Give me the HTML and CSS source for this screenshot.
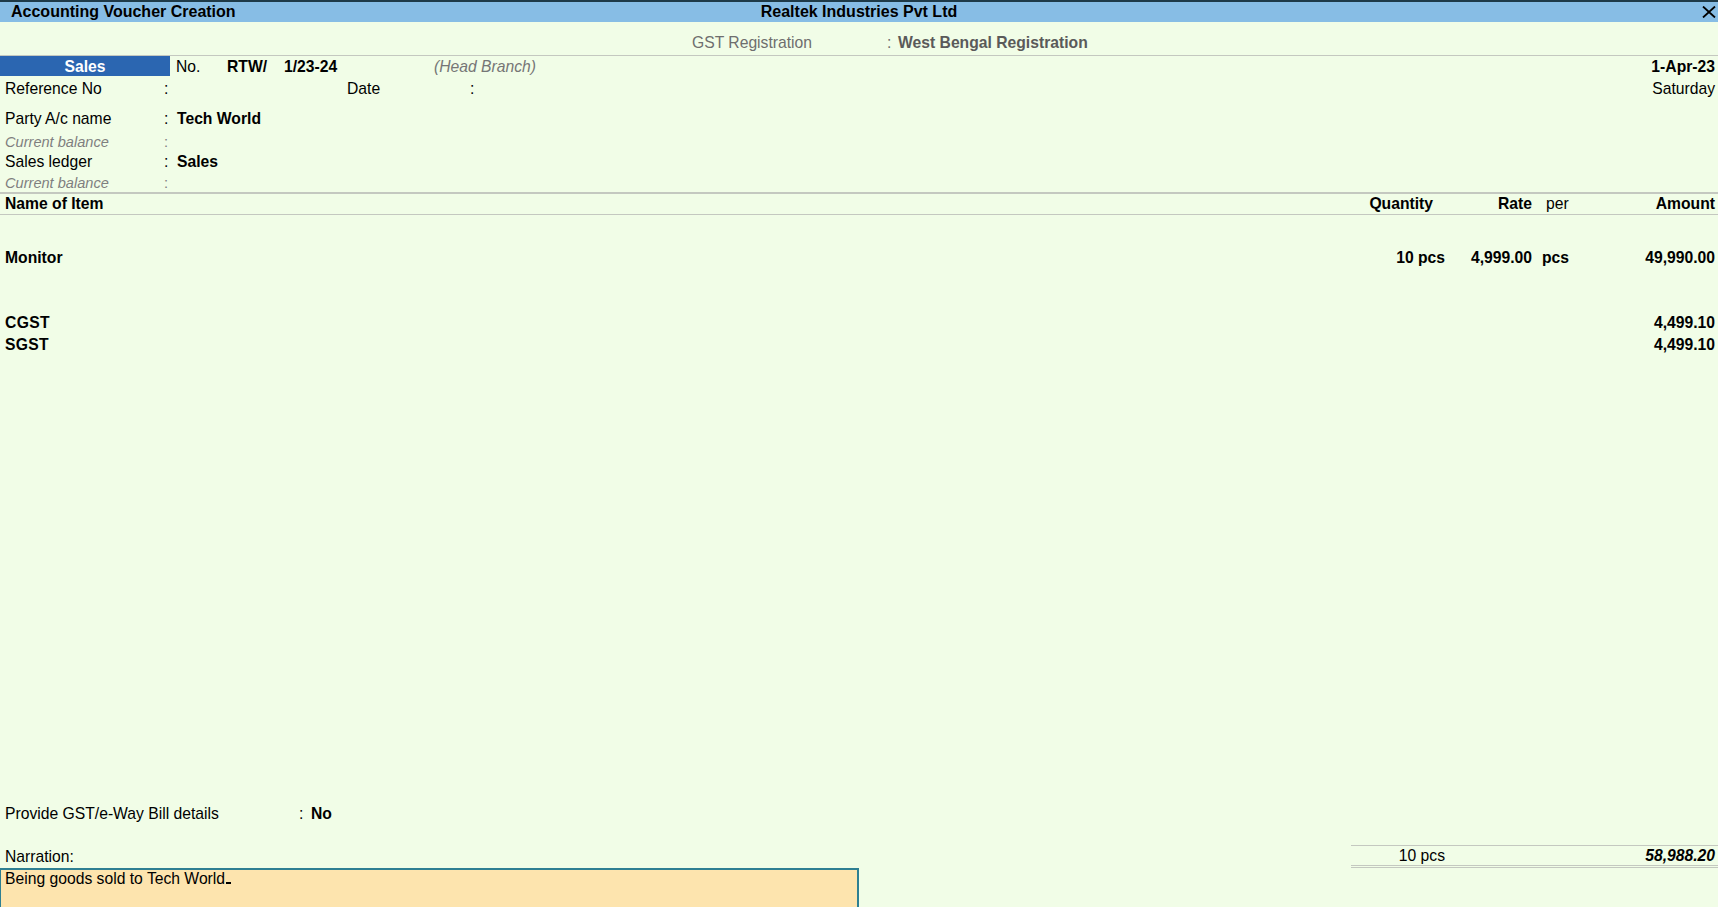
FILE: index.html
```html
<!DOCTYPE html>
<html>
<head>
<meta charset="utf-8">
<title>Accounting Voucher Creation</title>
<link rel="stylesheet" href="styles.css">
</head>
<body>
<div class="page">
  <div class="titlebar">
    <div class="tb-left">Accounting Voucher Creation</div>
    <div class="tb-center">Realtek Industries Pvt Ltd</div>
    <div class="tb-right">
      <svg class="close" width="14" height="12" viewBox="0 0 14 12"><path d="M1 0.5 L13 11.5 M13 0.5 L1 11.5" stroke="#000" stroke-width="1.8" fill="none"/></svg>
    </div>
  </div>

  <div class="gstrow">
    <span class="gst-label">GST Registration</span>
    <span class="gst-colon">:</span>
    <span class="gst-value">West Bengal Registration</span>
  </div>

  <div class="vrow">
    <div class="vtype">Sales</div>
    <span class="vno">No.</span>
    <span class="vpre">RTW/</span>
    <span class="vnum">1/23-24</span>
    <span class="vbranch">(Head Branch)</span>
    <span class="vdate">1-Apr-23</span>
  </div>

  <div class="frow ref">
    <span class="flabel">Reference No</span>
    <span class="fcolon">:</span>
    <span class="fdate">Date</span>
    <span class="fcolon2">:</span>
    <span class="fday">Saturday</span>
  </div>

  <div class="frow party">
    <span class="flabel">Party A/c name</span>
    <span class="fcolon">:</span>
    <span class="fvalue">Tech World</span>
  </div>
  <div class="frow cb cb1">
    <span class="flabel">Current balance</span>
    <span class="fcolon">:</span>
  </div>
  <div class="frow ledger">
    <span class="flabel">Sales ledger</span>
    <span class="fcolon">:</span>
    <span class="fvalue">Sales</span>
  </div>
  <div class="frow cb cb2">
    <span class="flabel">Current balance</span>
    <span class="fcolon">:</span>
  </div>

  <div class="irow ihead">
    <span class="c-name">Name of Item</span>
    <span class="c-qty">Quantity</span>
    <span class="c-rate">Rate</span>
    <span class="c-per">per</span>
    <span class="c-amt">Amount</span>
  </div>

  <div class="irow item">
    <span class="c-name">Monitor</span>
    <span class="c-qty">10 pcs</span>
    <span class="c-rate">4,999.00</span>
    <span class="c-per">pcs</span>
    <span class="c-amt">49,990.00</span>
  </div>

  <div class="irow tax tax1">
    <span class="c-name">CGST</span>
    <span class="c-qty"></span>
    <span class="c-rate"></span>
    <span class="c-per"></span>
    <span class="c-amt">4,499.10</span>
  </div>
  <div class="irow tax">
    <span class="c-name">SGST</span>
    <span class="c-qty"></span>
    <span class="c-rate"></span>
    <span class="c-per"></span>
    <span class="c-amt">4,499.10</span>
  </div>

  <div class="spacer"></div>

  <div class="frow ewb">
    <span class="ewb-label">Provide GST/e-Way Bill details</span>
    <span class="ewb-colon">:</span>
    <span class="fvalue">No</span>
  </div>

  <div class="narr-row">
    <span class="narr-label">Narration:</span>
    <div class="totals">
      <span class="t-qty">10 pcs</span>
      <span class="t-amt">58,988.20</span>
    </div>
  </div>

  <div class="narr-box">Being goods sold to Tech World<span class="cursor"></span></div>
</div>
</body>
</html>
```

FILE: styles.css
```css
* { box-sizing: border-box; }

html, body {
  margin: 0;
  padding: 0;
}

body {
  font-family: "Liberation Sans", Arial, sans-serif;
  font-size: 15.7px;
  color: #000;
  background: #f1fde7;
  width: 1718px;
  height: 907px;
  overflow: hidden;
}

.page {
  display: flex;
  flex-direction: column;
  height: 907px;
}

/* title bar */
.titlebar {
  height: 22px;
  border-top: 2px solid #1e3a48;
  background: #87bde5;
  display: grid;
  grid-template-columns: 1fr auto 1fr;
  align-items: center;
  padding: 0 2px;
  font-weight: bold;
  font-size: 16px;
  line-height: 20px;
}
.tb-left { padding-left: 9px; }
.tb-center { text-align: center; }
.tb-right { display: flex; justify-content: flex-end; align-items: center; }
.close { display: block; }

/* gst registration */
.gstrow {
  height: 34px;
  padding-top: 11px;
  line-height: 20px;
  border-bottom: 1px solid #c4c8c0;
  display: flex;
  padding-left: 692px;
  color: #6e6e6e;
}
.gst-label { width: 195px; }
.gst-colon { width: 11px; }
.gst-value { font-weight: bold; color: #5a5a5a; }

/* voucher type row */
.vrow {
  height: 20px;
  line-height: 20px;
  display: flex;
  align-items: stretch;
}
.vrow > span { padding-top: 1px; }
.vtype {
  width: 170px;
  height: 20px;
  padding-top: 1px;
  background: #2b66b1;
  color: #fff;
  font-weight: bold;
  text-align: center;
}
.vno { margin-left: 6px; width: 51px; }
.vpre { font-weight: bold; width: 57px; }
.vnum { font-weight: bold; width: 150px; }
.vbranch { font-style: italic; color: #767676; }
.vdate { margin-left: auto; margin-right: 3px; font-weight: bold; }

/* field rows */
.frow {
  display: flex;
  height: 20px;
  line-height: 20px;
  padding-left: 5px;
  padding-top: 1px;
}
.flabel { width: 159px; }
.fcolon { width: 13px; }
.fvalue { font-weight: bold; }
.fdate { margin-left: 170px; width: 123px; }
.fcolon2 { width: 10px; }
.fday { margin-left: auto; margin-right: 3px; }

.ref { margin-top: 2px; }
.party { margin-top: 10px; }
.cb {
  height: 18px;
  line-height: 18px;
  font-style: italic;
  font-size: 14.6px;
  color: #7f7f7f;
}
.cb .fcolon { font-style: normal; }
.cb1 { margin-top: 4px; }
.ledger { margin-top: 1px; }
.cb2 { margin-top: 2px; height: 19px; }

/* item grid */
.irow {
  display: grid;
  grid-template-columns: 1fr 100px 87px 68px 115px;
  padding: 1px 3px 0 5px;
  height: 20px;
  line-height: 20px;
  font-weight: bold;
}
.c-qty, .c-rate, .c-amt { text-align: right; }
.c-per { padding-left: 10px; }

.ihead {
  border-top: 2px solid #c4c8c0;
  border-bottom: 1px solid #c4c8c0;
  height: 23px;
  padding-top: 0;
}
.ihead .c-qty { padding-right: 12px; }
.ihead .c-per { padding-left: 14px; font-weight: normal; }

.item { margin-top: 32px; }
.tax { margin-top: 2px; letter-spacing: 0.3px; }
.tax .c-amt { letter-spacing: 0; }
.tax1 { margin-top: 45px; }

.spacer { flex: 1; }

/* bottom */
.ewb { margin-bottom: 22px; }
.ewb-label { width: 294px; }
.ewb-colon { width: 12px; }

.narr-row {
  display: flex;
  align-items: stretch;
  height: 23px;
}
.narr-label {
  padding-left: 5px;
  padding-top: 2px;
  line-height: 20px;
}
.totals {
  margin-left: auto;
  width: 367px;
  border-top: 1px solid #c4c8c0;
  border-bottom: 3px double #c4c8c0;
  display: grid;
  grid-template-columns: 94px 1fr;
  padding-right: 3px;
  padding-top: 1px;
  line-height: 18px;
}
.t-qty { text-align: right; }
.t-amt { text-align: right; font-weight: bold; font-style: italic; }

.narr-box {
  width: 859px;
  height: 39px;
  background: #fde4ae;
  border: 2px solid #2e7f92;
  border-bottom: none;
  border-left-width: 1px;
  padding: 0 0 0 4px;
  line-height: 18px;
  font-size: 15.7px;
}
.cursor {
  display: inline-block;
  width: 5px;
  height: 2px;
  background: #000;
  vertical-align: baseline;
  margin-left: 1px;
}
```
